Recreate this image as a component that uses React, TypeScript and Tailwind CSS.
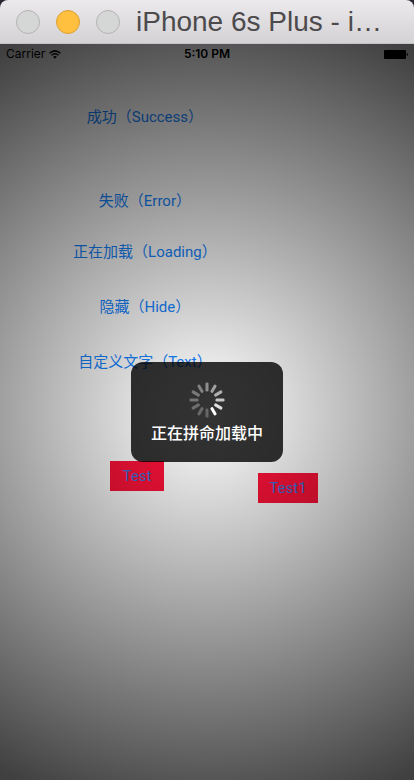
const uiFont = "font-['Inter','Noto_Sans_CJK_SC',sans-serif]";
const controlFont = "font-['Roboto','Noto_Sans_CJK_SC',sans-serif]";

const spokes = [
  { angle: 0, shade: "#8e8e8e" },
  { angle: 30, shade: "#a0a0a0" },
  { angle: 60, shade: "#b0b0b0" },
  { angle: 90, shade: "#c8c8c8" },
  { angle: 120, shade: "#e0e0e0" },
  { angle: 150, shade: "#ffffff" },
  { angle: 180, shade: "#666666" },
  { angle: 210, shade: "#6a6a6a" },
  { angle: 240, shade: "#6e6e6e" },
  { angle: 270, shade: "#747474" },
  { angle: 300, shade: "#7a7a7a" },
  { angle: 330, shade: "#828282" },
];

function Spinner() {
  return (
    <svg className="size-9" viewBox="-18 -18 36 36" aria-hidden="true">
      {spokes.map((s) => (
        <rect
          key={s.angle}
          x="-1.5"
          y="-17.5"
          width="3"
          height="9"
          rx="1.3"
          fill={s.shade}
          transform={`rotate(${s.angle})`}
        />
      ))}
    </svg>
  );
}

function TitleBar() {
  return (
    <header className="flex h-11 items-center bg-[#2b2530]">
      <div className="flex h-full w-full items-center gap-4 rounded-t-lg border-b border-[#c4c2c4] bg-linear-to-b from-[#ebe9eb] to-[#d4d2d4] px-4">
        <button aria-label="Close" className="size-6 shrink-0 rounded-full border border-[#b4b4b4] bg-[#d5d6d6]" />
        <button aria-label="Minimize" className="size-6 shrink-0 rounded-full border border-[#dd9f35] bg-[#ffbf3f]" />
        <button aria-label="Zoom" className="size-6 shrink-0 rounded-full border border-[#b4b4b4] bg-[#d5d6d6]" />
        <h1 className="min-w-0 flex-1 whitespace-nowrap font-['Liberation_Sans',Arial,sans-serif] text-[28px] leading-8 text-[#4c4a4c]">
          iPhone 6s Plus - i…
        </h1>
      </div>
    </header>
  );
}

function StatusBar() {
  return (
    <div className="grid h-5 grid-cols-3 items-center px-1.5 text-xs text-black">
      <div className="flex items-center gap-1">
        <span>Carrier</span>
        <svg className="h-[9px] w-3" viewBox="0 0 12 9" fill="none" stroke="#000" aria-hidden="true">
          <path d="M.6 3.2Q6-1.4 11.4 3.2" strokeWidth="1.5" />
          <path d="M2.5 5.3Q6 2.3 9.5 5.3" strokeWidth="1.4" />
          <path d="M6 8.8 4.1 6.8Q6 5.4 7.9 6.8Z" fill="#000" stroke="none" />
        </svg>
      </div>
      <span className="text-center font-semibold">5:10 PM</span>
      <svg className="h-[9px] w-6 justify-self-end" viewBox="0 0 24 9" aria-hidden="true">
        <rect width="22" height="9" rx="1" />
        <path d="M22.6 3Q24 3.4 24 4.5T22.6 6Z" />
      </svg>
    </div>
  );
}

function LinkButton({ label }: { label: string }) {
  return (
    <button className="h-[30px] whitespace-nowrap text-[15px] leading-5 text-[#1484ff]">{label}</button>
  );
}

export default function App() {
  return (
    <div className={`flex min-h-screen flex-col ${uiFont}`}>
      <TitleBar />
      <main className="relative flex-1 bg-white">
        <StatusBar />
        <div className={`flex w-[70%] flex-col items-center pt-[38px] ${controlFont}`}>
          <LinkButton label="成功（Success）" />
          <div className="flex flex-col items-center gap-[21px] pt-[54px]">
            <LinkButton label="失败（Error）" />
            <div className="flex flex-col items-center gap-[25px]">
              <LinkButton label="正在加载（Loading）" />
              <LinkButton label="隐藏（Hide）" />
              <LinkButton label="自定义文字（Text）" />
            </div>
          </div>
        </div>
        <div className={`flex items-start justify-between pt-[84px] pr-24 pl-[110px] ${controlFont}`}>
          <button className="h-[30px] w-[54px] bg-[#ff1239] text-[15px] leading-5 text-[#3c70d8]">Test</button>
          <button className="mt-3 h-[30px] w-[60px] bg-[#ff1239] text-[15px] leading-5 text-[#3c70d8]">Test1</button>
        </div>
        <div className="absolute inset-0 flex items-center justify-center bg-[radial-gradient(circle_414px_at_center,rgba(0,0,0,0),rgba(0,0,0,0.75))]">
          <div
            role="status"
            className="flex flex-col items-center gap-[3px] rounded-xl bg-black/80 px-5 pt-5 pb-[17px] text-base font-medium text-white"
          >
            <Spinner />
            <p>正在拼命加载中</p>
          </div>
        </div>
      </main>
    </div>
  );
}
